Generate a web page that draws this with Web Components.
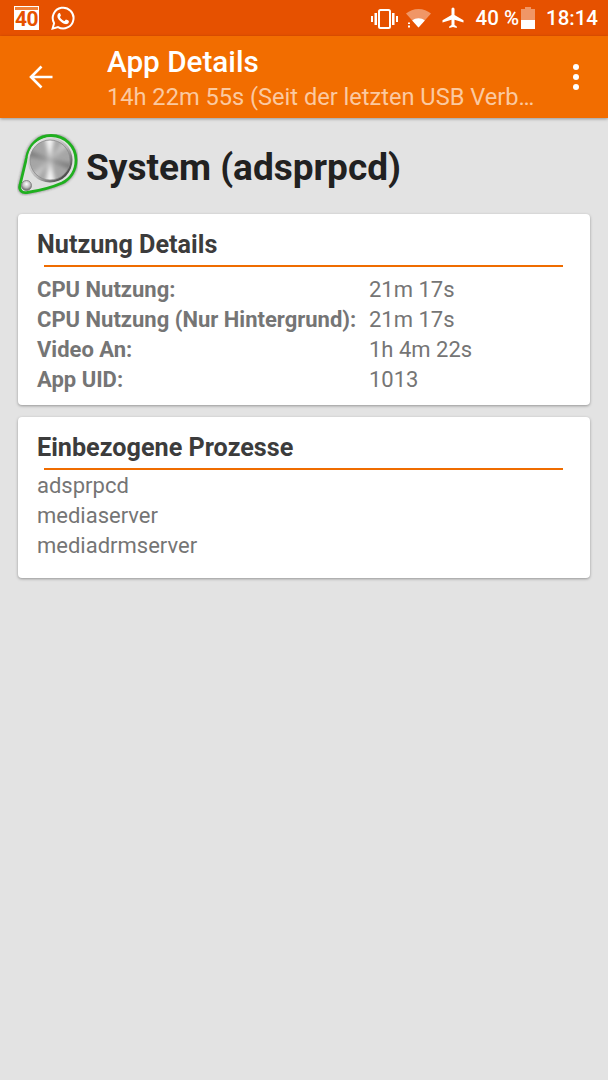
<!DOCTYPE html>
<html>
<head>
<meta charset="utf-8">
<style>
    html, body { margin: 0; height: 100%; }
    body {
        background: #e3e3e3;
        font-family: Roboto, "Noto Sans", sans-serif;
        width: 608px;
        height: 1080px;
        overflow: hidden;
    }
</style>
</head>
<body>
<status-bar></status-bar>
<app-toolbar heading="App Details" sub="14h 22m 55s (Seit der letzten USB Verb…"></app-toolbar>
<app-title>System (adsprpcd)</app-title>
<info-card heading="Nutzung Details" style="height:191px;--rows-top:8px">
    <detail-row label="CPU Nutzung:" value="21m 17s"></detail-row>
    <detail-row label="CPU Nutzung (Nur Hintergrund):" value="21m 17s"></detail-row>
    <detail-row label="Video An:" value="1h 4m 22s"></detail-row>
    <detail-row label="App UID:" value="1013"></detail-row>
</info-card>
<info-card heading="Einbezogene Prozesse" style="margin-top:12px;height:161px;--rows-top:1px">
    <process-row>adsprpcd</process-row>
    <process-row>mediaserver</process-row>
    <process-row>mediadrmserver</process-row>
</info-card>
<script>
//--------------------------------------------------------
// Status bar
//--------------------------------------------------------
class StatusBar extends HTMLElement {
    constructor() {
        super();
        this.attachShadow({ mode: "open" });
        this.shadowRoot.innerHTML = `
        <style>
            :host { display: flex; align-items: center; height: 36px; background: #e65100; color: #fff; padding: 0 10px 0 14px; font-size: 20.500px; font-weight: 500; }
            .cal { width: 25px; height: 24px; margin-top: -1px; background: #fff; color: #e65100; font-size: 21px; font-weight: 700; text-align: center; letter-spacing: -0.5px; overflow: hidden; }
            .cal i { display: block; height: 3px; margin: 1px 1px 0; background: #f0813a; }
            .cal b { display: block; line-height: 19px; font-weight: 700; }
            svg { display: block; }
            .wa { margin-left: 12px; }
            .spacer { flex: 1; }
            .vib { margin-right: 8px; margin-top: 1px; }
            .wifi { margin-right: 10px; margin-top: 1px; }
            .plane { margin-right: 10px; }
            .bat { margin-left: 2px; margin-right: 11px; }
        </style>
        <div class="cal"><i></i><b>40</b></div>
        <svg class="wa" width="24" height="24" viewBox="0 0 24 24">
            <path d="M1.600 22.600l1.500-5.400A10.400 10.400 0 1 1 7 21.100z" fill="none" stroke="#fff" stroke-width="2"/>
            <path d="M8.700 6.900c-.4 0-.9.100-1.300.6-.5.6-1 1.400-1 2.700 0 1.500 1 3 2.500 4.600 1.800 1.900 3.700 2.900 5.400 3.300 1.500.3 3-.6 3.400-1.700.2-.6.2-1.200.1-1.400-.2-.3-2.400-1.400-2.800-1.400-.4 0-1.100 1.300-1.500 1.500-.4.200-3.800-1.700-4.600-4-.1-.4 1-1.200 1-1.700 0-.4-.9-2.500-1.200-2.500z" fill="#fff"/>
        </svg>
        <div class="spacer"></div>
        <svg class="vib" width="27" height="20" viewBox="0 0 27 20" fill="#fff">
            <rect x="8" y="1" width="11" height="18" rx="1.500" fill="none" stroke="#fff" stroke-width="2"/>
            <rect x="0" y="7" width="2" height="6"/><rect x="3.500" y="4" width="2.500" height="12"/>
            <rect x="21" y="4" width="2.500" height="12"/><rect x="25" y="7" width="2" height="6"/>
        </svg>
        <svg class="wifi" width="25" height="19" viewBox="0 0 25 19">
            <path d="M0 4.500C3.400 1.800 7.700 0 12.500 0S21.600 1.800 25 4.500L12.500 18.500z" fill="#fff" fill-opacity=".4"/>
            <path d="M6.200 11.500C8 10 10.100 9.200 12.500 9.200s4.500.8 6.300 2.300L12.500 18.500z" fill="#fff"/>
            <rect x="2" y="13.500" width="2" height="1.500" fill="#fff"/><rect x="2" y="16.500" width="2" height="2" fill="#fff"/>
        </svg>
        <svg class="plane" width="24" height="24" viewBox="0 0 24 24" fill="#fff">
            <path d="M22.500 16.500v-2.200L13.500 9V3a1.500 1.500 0 0 0-3 0v6l-9 5.300v2.200l9-2.700V19l-2.300 1.600V22l3.800-1 3.800 1v-1.400L13.500 19v-5.200z"/>
        </svg>
        <span>40 %</span>
        <svg class="bat" width="14" height="22" viewBox="0 0 14 22">
            <path d="M4 0h6v2h4v20H0V2h4z" fill="#fff" fill-opacity=".4"/>
            <rect x="0" y="13" width="14" height="9" fill="#fff"/>
        </svg>
        <span>18:14</span>
        `;
    }
}
customElements.define("status-bar", StatusBar);

//--------------------------------------------------------
// Toolbar
//--------------------------------------------------------
class AppToolbar extends HTMLElement {
    constructor() {
        super();
        this.attachShadow({ mode: "open" });
        this.shadowRoot.innerHTML = `
        <style>
            :host { display: flex; align-items: center; height: 82px; background: #f26d00; color: #fff; box-shadow: 0 1px 3px rgba(0,0,0,.35); position: relative; }
            .back { width: 107px; padding-left: 29px; box-sizing: border-box; flex: none; }
            svg { display: block; }
            .text { flex: 1; min-width: 0; margin-top: 2px; }
            .h { font-size: 29.700px; font-weight: 500; line-height: 34px; }
            .s { font-size: 23.600px; line-height: 30px; margin-top: 3px; color: #fbc9a0; white-space: nowrap; }
            .more { width: 5px; margin-right: 30px; flex: none; display: flex; flex-direction: column; gap: 4px; margin-top: -1px; }
            .more i { width: 6px; height: 6px; border-radius: 50%; background: #fff; }
        </style>
        <div class="back">
            <svg width="24" height="24" viewBox="0 0 24 24"><path d="M23.500 12H2M12.500 1.500L2 12l10.500 10.500" fill="none" stroke="#fff" stroke-width="2.600"/></svg>
        </div>
        <div class="text">
            <div class="h"></div>
            <div class="s"></div>
        </div>
        <div class="more"><i></i><i></i><i></i></div>
        `;
    }

    connectedCallback() {
        this.shadowRoot.querySelector(".h").textContent = this.getAttribute("heading");
        this.shadowRoot.querySelector(".s").textContent = this.getAttribute("sub");
    }
}
customElements.define("app-toolbar", AppToolbar);

//--------------------------------------------------------
// App title with icon
//--------------------------------------------------------
class AppTitle extends HTMLElement {
    constructor() {
        super();
        this.attachShadow({ mode: "open" });
        this.shadowRoot.innerHTML = `
        <style>
            :host { display: flex; align-items: center; height: 96px; padding-left: 17px; color: #212121; font-size: 37px; font-weight: 700; }
            svg { display: block; flex: none; margin-right: 8px; margin-top: -2px; }
            span { margin-top: 3px; }
        </style>
        <svg width="61" height="62" viewBox="0 0 61 62">
            <defs>
                <linearGradient id="rim" x1="0" y1="0" x2="1" y2="1">
                    <stop offset="0" stop-color="#f4f4f4"/><stop offset=".55" stop-color="#b5b5b5"/><stop offset=".85" stop-color="#4a4a4a"/><stop offset="1" stop-color="#2e2e2e"/>
                </linearGradient>
                <radialGradient id="knob" cx=".5" cy=".35" r=".6">
                    <stop offset="0" stop-color="#fff"/><stop offset=".6" stop-color="#bdbdbd"/><stop offset="1" stop-color="#6f6f6f"/>
                </radialGradient>
                <filter id="soft" x="-20%" y="-20%" width="140%" height="140%"><feGaussianBlur stdDeviation="1.200"/></filter>
                <filter id="wedge" x="-20%" y="-20%" width="140%" height="140%"><feGaussianBlur stdDeviation="2.200"/></filter>
                <clipPath id="face"><circle cx="33" cy="26" r="20"/></clipPath>
            </defs>
            <path d="M3 51L9.500 24C12 10 22 1.500 34 1.500 48 1.500 59 12.500 59 26 59 37 53 45 45 49 36 53 20 57 10 58.500 5 59.500 1.500 56 3 51z" fill="none" stroke="#333" stroke-opacity=".45" stroke-width="4" filter="url(#soft)"/>
            <path d="M3 51L9.500 24C12 10 22 1.500 34 1.500 48 1.500 59 12.500 59 26 59 37 53 45 45 49 36 53 20 57 10 58.500 5 59.500 1.500 56 3 51z" fill="#dfe0df" stroke="#1fb01f" stroke-width="2.800" stroke-linejoin="round"/>
            <circle cx="33" cy="26" r="22.500" fill="url(#rim)"/>
            <g clip-path="url(#face)">
                <rect x="10" y="3" width="46" height="46" fill="#a6a6a6"/>
                <g filter="url(#wedge)">
                    <path d="M33 26L27 0h11zM33 26L28 52h11z" fill="#f6f6f6"/>
                    <path d="M33 26L8 14v8zM33 26L58 30v8z" fill="#7c7c7c"/>
                    <path d="M33 26L12 42l6 6zM33 26L54 10l-6-6z" fill="#c6c6c6"/>
                </g>
            </g>
            <circle cx="33" cy="26" r="20" fill="none" stroke="#8b8b8b" stroke-width=".8"/>
            <circle cx="9.500" cy="51.500" r="5" fill="url(#knob)" stroke="#777" stroke-width=".8"/>
        </svg>
        <span><slot></slot></span>
        `;
    }
}
customElements.define("app-title", AppTitle);

//--------------------------------------------------------
// Card
//--------------------------------------------------------
class InfoCard extends HTMLElement {
    constructor() {
        super();
        this.attachShadow({ mode: "open" });
        this.shadowRoot.innerHTML = `
        <style>
            :host { display: block; margin: 0 18px; background: #fff; border-radius: 4px; box-shadow: 0 1px 3px rgba(0,0,0,.35); box-sizing: border-box; padding: 15px 19px 0; }
            .h { font-size: 25.200px; font-weight: 700; line-height: 32px; color: #3c3c3c; }
            hr { border: 0; height: 2px; background: #ef6c00; margin: 4px 8px var(--rows-top, 8px) 7px; }
        </style>
        <div class="h"></div>
        <hr>
        <slot></slot>
        `;
    }

    connectedCallback() {
        this.shadowRoot.querySelector(".h").textContent = this.getAttribute("heading");
    }
}
customElements.define("info-card", InfoCard);

class DetailRow extends HTMLElement {
    constructor() {
        super();
        this.attachShadow({ mode: "open" });
        this.shadowRoot.innerHTML = `
        <style>
            :host { display: grid; grid-template-columns: 332px 1fr; font-size: 22px; line-height: 30px; color: #757575; }
            .l { font-weight: 700; white-space: nowrap; }
        </style>
        <div class="l"></div><div class="v"></div>
        `;
    }

    connectedCallback() {
        this.shadowRoot.querySelector(".l").textContent = this.getAttribute("label");
        this.shadowRoot.querySelector(".v").textContent = this.getAttribute("value");
    }
}
customElements.define("detail-row", DetailRow);

class ProcessRow extends HTMLElement {
    constructor() {
        super();
        this.attachShadow({ mode: "open" });
        this.shadowRoot.innerHTML = `
        <style>
            :host { display: block; font-size: 22px; line-height: 30px; color: #757575; }
        </style>
        <slot></slot>
        `;
    }
}
customElements.define("process-row", ProcessRow);
</script>
</body>
</html>
